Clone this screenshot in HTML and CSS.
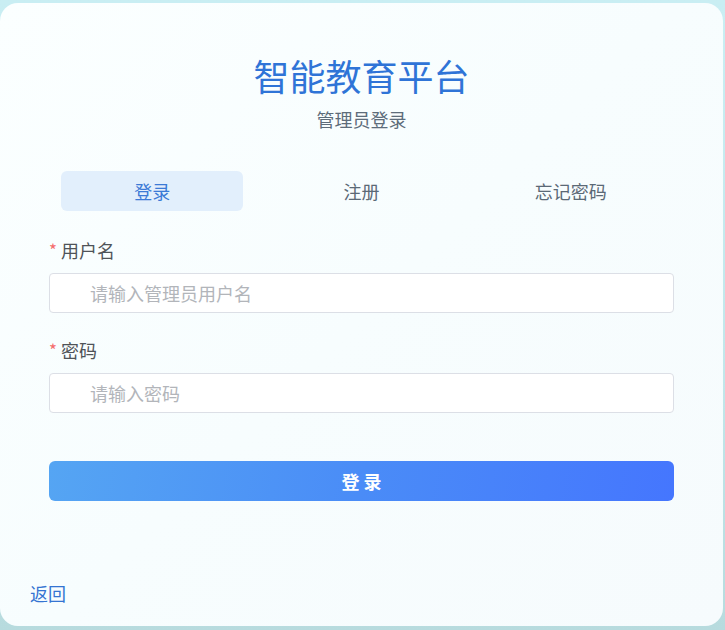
FILE: index.html
```html
<!DOCTYPE html>
<html lang="zh-CN">
<head>
<meta charset="utf-8">
<title>智能教育平台</title>
<link rel="stylesheet" href="styles.css">
</head>
<body>
<div class="card">
  <div class="content">
    <h1 class="title">智能教育平台</h1>
    <div class="subtitle">管理员登录</div>
    <div class="tabs">
      <div class="tab active">登录</div>
      <div class="tab">注册</div>
      <div class="tab">忘记密码</div>
    </div>
    <div class="field field-first">
      <label class="label"><span class="star">*</span>用户名</label>
      <input class="input" type="text" placeholder="请输入管理员用户名">
    </div>
    <div class="field field-next">
      <label class="label"><span class="star">*</span>密码</label>
      <input class="input" type="password" placeholder="请输入密码">
    </div>
    <button class="btn">登录</button>
  </div>
  <a class="back">返回</a>
</div>
</body>
</html>
```
FILE: styles.css
```css
html, body {
  margin: 0;
  padding: 0;
  height: 630px;
  overflow: hidden;
}
body {
  background: linear-gradient(180deg, #c9eef3 0%, #c2e6ea 60%, #b7dbde 100%);
  font-family: "Noto Sans CJK SC", "Noto Sans", sans-serif;
}
.card {
  box-sizing: border-box;
  width: 723px;
  height: 623px;
  margin-top: 3px;
  border-radius: 18px;
  background: linear-gradient(135deg, #fbffff 0%, #f7fdfe 50%, #f6fbfd 100%);
  display: flex;
  flex-direction: column;
  padding: 49px 0 21px 0;
}
.content {
  padding: 0 49px;
  display: flex;
  flex-direction: column;
}
.title {
  margin: 0;
  text-align: center;
  font-size: 36px;
  line-height: 47px;
  font-weight: 400;
  color: #2f74d7;
}
.subtitle {
  margin-top: 8px;
  text-align: center;
  font-size: 18px;
  line-height: 24px;
  color: #5d6c7a;
}
.tabs {
  margin-top: 40px;
  padding: 0 12px;
  display: flex;
  gap: 27px;
}
.tab {
  flex: 1;
  height: 40px;
  line-height: 40px;
  text-align: center;
  font-size: 18px;
  color: #5b6976;
  border-radius: 6px;
}
.tab.active {
  background: #e2effc;
  color: #3b7ad6;
}
.field {
  display: flex;
  flex-direction: column;
}
.field-first {
  margin-top: 27px;
}
.field-next {
  margin-top: 25px;
}
.label {
  font-size: 18px;
  line-height: 24px;
  color: #4f5358;
  display: flex;
  align-items: center;
}
.star {
  color: #f56c6c;
  font-size: 17px;
  margin-right: 4px;
}
.input {
  margin-top: 11px;
  box-sizing: border-box;
  height: 40px;
  width: 100%;
  border: 1px solid #dcdfe6;
  border-radius: 4px;
  background: #fff;
  padding: 0 12px 0 40px;
  font-family: inherit;
  font-size: 18px;
  color: #333;
  outline: none;
}
.input::placeholder {
  color: #b2b5ba;
}
.btn {
  margin-top: 48px;
  height: 40px;
  border: none;
  border-radius: 6px;
  background: linear-gradient(100deg, #55a5f3 0%, #4a8cf7 50%, #4576fe 100%);
  color: #fff;
  font-family: inherit;
  font-size: 18px;
  font-weight: 700;
  letter-spacing: 4px;
  padding: 0 0 0 4px;
}
.back {
  margin-top: auto;
  padding-left: 30px;
  font-size: 18px;
  line-height: 24px;
  color: #3474d2;
}
```
